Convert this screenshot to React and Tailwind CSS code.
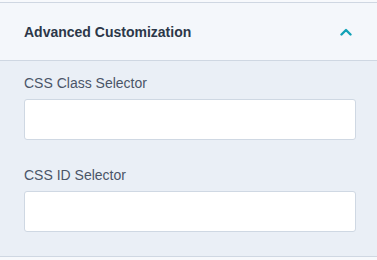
export default function App() {
  const font = { fontFamily: '"Liberation Sans", Arial, sans-serif' };
  return (
    <div className="w-[377px] h-[260px] bg-[#f7f9fc] pt-[2px]" style={font}>
      <div className="border-t border-b border-[#cfd7e2]">
        <div className="h-[58px] bg-[#f4f7fb] border-b border-[#cfd7e2] flex items-center justify-between pl-[24px] pr-[25px]">
          <span className="text-[14px] leading-[20px] font-bold text-[#2c3749]">Advanced Customization</span>
          <svg width="12" height="8" viewBox="0 0 12 8" fill="none">
            <path d="M1.5 6.5 L6 2 L10.5 6.5" stroke="#11a2b7" strokeWidth="2.4" strokeLinecap="round" strokeLinejoin="round" />
          </svg>
        </div>
        <div className="bg-[#eaeff6] pt-[12px] pb-[24px] pl-[24px] pr-[21px] flex flex-col">
          <label className="text-[14px] leading-[20px] text-[#4a5568] mb-[6px]">CSS Class Selector</label>
          <input className="h-[41px] w-full bg-white border border-[#cfd8e3] rounded-[3px] outline-none" />
          <label className="text-[14px] leading-[20px] text-[#4a5568] mt-[25px] mb-[6px]">CSS ID Selector</label>
          <input className="h-[41px] w-full bg-white border border-[#cfd8e3] rounded-[3px] outline-none" />
        </div>
      </div>
    </div>
  );
}
